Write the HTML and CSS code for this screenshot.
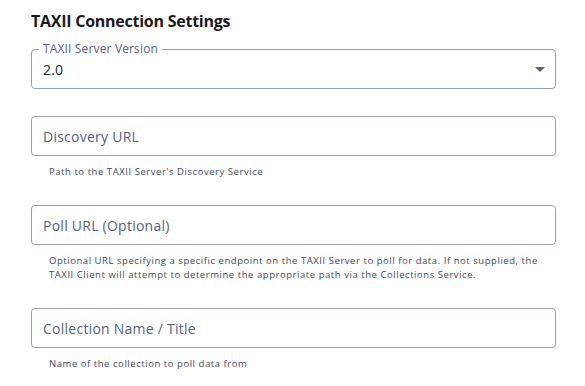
FILE: index.html
```html
<!DOCTYPE html>
<html>
<head>
<meta charset="utf-8">
<link rel="stylesheet" href="styles.css">
</head>
<body>
<div class="panel">
  <h2 class="title">TAXII Connection Settings</h2>

  <div class="field select">
    <span class="legend">TAXII Server Version</span>
    <span class="value">2.0</span>
    <svg class="arrow" width="10" height="5" viewBox="0 0 10 5"><path d="M0 0 L10 0 L5 5 Z" fill="#5a6376"/></svg>
  </div>

  <div class="field box"><span class="placeholder">Discovery URL</span></div>
  <p class="helper">Path to the TAXII Server's Discovery Service</p>

  <div class="field box"><span class="placeholder">Poll URL (Optional)</span></div>
  <p class="helper">Optional URL specifying a specific endpoint on the TAXII Server to poll for data. If not supplied, the TAXII Client will attempt to determine the appropriate path via the Collections Service.</p>

  <div class="field box"><span class="placeholder">Collection Name / Title</span></div>
  <p class="helper">Name of the collection to poll data from</p>
</div>
</body>
</html>
```

FILE: styles.css
```css
html, body {
  margin: 0;
  padding: 0;
  background: #ffffff;
}
body {
  font-family: "Open Sans", "Noto Sans", sans-serif;
  width: 585px;
  height: 386px;
  overflow: hidden;
}
.panel {
  padding: 10px 29px 0 31px;
  display: flex;
  flex-direction: column;
}
.title {
  margin: 0;
  font-size: 16px;
  line-height: 23px;
  font-weight: 700;
  letter-spacing: -0.25px;
  color: #1a1a1d;
}
.field {
  box-sizing: border-box;
  width: 525px;
  height: 40px;
  border: 1px solid #989fb1;
  border-radius: 4px;
  display: flex;
  align-items: center;
  padding: 0 10px 0 11px;
}
.select {
  position: relative;
  margin-top: 16px;
}
.legend {
  position: absolute;
  top: -8px;
  left: 7px;
  padding: 0 4px;
  background: #ffffff;
  font-size: 12px;
  line-height: 14px;
  letter-spacing: 0.15px;
  color: #57627e;
}
.value {
  font-size: 14px;
  letter-spacing: 0.2px;
  color: #22272f;
  flex: 1;
  padding-top: 1px;
}
.arrow {
  display: block;
}
.box {
  margin-top: 27px;
}
.placeholder {
  font-size: 14px;
  letter-spacing: 0.25px;
  color: #57627e;
}
.helper {
  margin: 9px 0 0 18px;
  font-size: 9.5px;
  line-height: 14px;
  letter-spacing: 0.55px;
  color: #444a57;
  width: 495px;
}
.helper + .box {
  margin-top: 26px;
}
```
